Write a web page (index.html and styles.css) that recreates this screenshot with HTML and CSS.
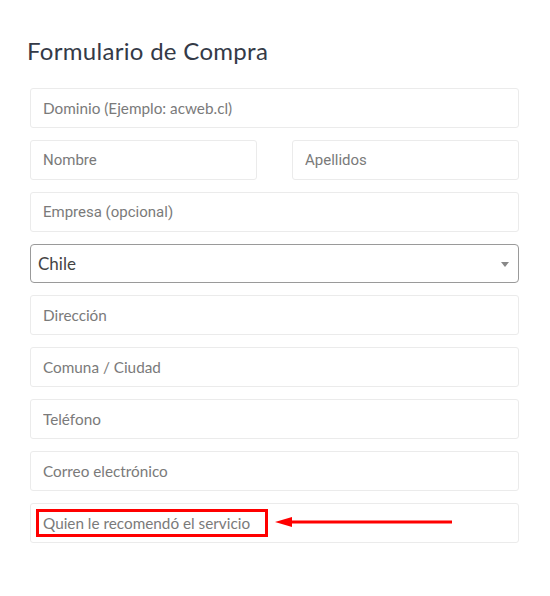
FILE: index.html
```html
<!DOCTYPE html>
<html lang="es">
  <head>
    <meta charset="UTF-8" />
    <meta name="viewport" content="width=device-width, initial-scale=1.0" />
    <title>Formulario de Compra</title>
    <link rel="stylesheet" href="styles.css">
  </head>
  <body>
    <div class="container">
      <h1>Formulario de Compra</h1>
      <form class="form">
        <input type="text" class="field" placeholder="Dominio (Ejemplo: acweb.cl)" />
        <div class="row">
          <input type="text" class="field alt" placeholder="Nombre" />
          <input type="text" class="field alt" placeholder="Apellidos" />
        </div>
        <input type="text" class="field alt" placeholder="Empresa (opcional)" />
        <div class="select-wrap">
          <select class="select">
            <option>Chile</option>
          </select>
          <span class="caret"></span>
        </div>
        <input type="text" class="field" placeholder="Dirección" />
        <input type="text" class="field" placeholder="Comuna / Ciudad" />
        <input type="text" class="field" placeholder="Teléfono" />
        <input type="text" class="field" placeholder="Correo electrónico" />
        <div class="marked">
          <input type="text" class="field" placeholder="Quien le recomendó el servicio" />
          <span class="mark-box"></span>
          <svg class="mark-arrow" width="180" height="12" viewBox="0 0 180 12">
            <polygon points="0,6 17,1 17,11" fill="#ff0000" />
            <rect x="15" y="4.5" width="162" height="3" fill="#ff0000" />
          </svg>
        </div>
      </form>
    </div>
  </body>
</html>
```

FILE: styles.css
```css
* {
  margin: 0;
  padding: 0;
  box-sizing: border-box;
}

body {
  background-color: #ffffff;
  font-family: "Lato", "Open Sans", sans-serif;
}

.container {
  width: 550px;
  padding: 36px 31px 0 30px;
}

h1 {
  font-size: 24px;
  font-weight: 400;
  color: #343a47;
  margin-left: -3px;
  margin-bottom: 23px;
  letter-spacing: 0.3px;
}

.form {
  display: flex;
  flex-direction: column;
  gap: 12px;
}

.row {
  display: flex;
  justify-content: space-between;
}

.row .field {
  width: 227px;
}

.field {
  width: 100%;
  height: 40px;
  padding: 0 12px;
  border: 1px solid #ebebeb;
  border-radius: 3px;
  background: #ffffff;
  font-family: "Lato", sans-serif;
  font-size: 15.3px;
  color: #555;
  outline: none;
}

.field::placeholder {
  color: #7a7a7a;
}

.field.alt {
  font-family: "Roboto", sans-serif;
  font-size: 15px;
}

.select-wrap {
  position: relative;
}

.select {
  width: 100%;
  height: 39px;
  padding: 0 7px;
  border: 1px solid #9a9a9a;
  border-radius: 4px;
  background: #ffffff;
  font-family: "Lato", sans-serif;
  font-size: 17px;
  color: #444;
  appearance: none;
  -webkit-appearance: none;
}

.caret {
  position: absolute;
  right: 10px;
  top: 18px;
  border-left: 4px solid transparent;
  border-right: 4px solid transparent;
  border-top: 5px solid #888;
}

.marked {
  position: relative;
}

.mark-box {
  position: absolute;
  left: 6px;
  top: 6px;
  width: 232px;
  height: 28px;
  border: 3px solid #ff0000;
}

.mark-arrow {
  position: absolute;
  left: 245px;
  top: 13px;
}
```
